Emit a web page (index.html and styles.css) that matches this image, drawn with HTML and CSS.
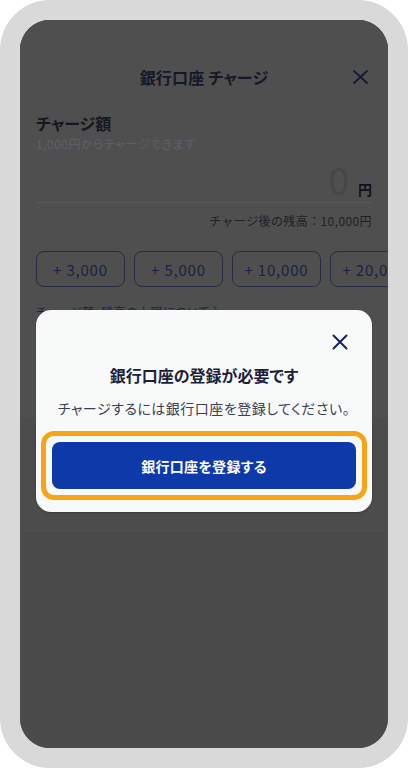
FILE: index.html
```html
<!DOCTYPE html>
<html lang="ja">
<head>
<meta charset="utf-8">
<title>銀行口座 チャージ</title>
<link rel="stylesheet" href="styles.css">
</head>
<body>
<div class="frame">
  <div class="screen">
    <div class="main">
      <header class="nav">
        <span></span>
        <h1 class="nav-title">銀行口座 チャージ</h1>
        <button class="nav-close" aria-label="閉じる">
          <svg width="15" height="14" viewBox="0 0 15 14"><path d="M1 1L14 13M14 1L1 13" stroke="currentColor" stroke-width="1.8" fill="none" stroke-linecap="round"/></svg>
        </button>
      </header>
      <section class="amount">
        <h2 class="amount-title">チャージ額</h2>
        <p class="amount-sub">1,000円からチャージできます</p>
        <div class="amount-row">
          <span class="amount-value">0</span>
          <span class="amount-unit">円</span>
        </div>
        <p class="balance">チャージ後の残高：10,000円</p>
        <div class="presets">
          <button class="preset">+ 3,000</button>
          <button class="preset">+ 5,000</button>
          <button class="preset">+ 10,000</button>
          <button class="preset">+ 20,000</button>
        </div>
        <p class="limit-link">チャージ額・残高の上限について 〉</p>
      </section>
    </div>
    <div class="band"></div>

    <div class="overlay">
      <div class="modal" role="dialog">
        <div class="modal-head">
          <button class="modal-close" aria-label="閉じる">
            <svg width="16" height="16" viewBox="0 0 16 16"><path d="M1.5 1.5L14.5 14.5M14.5 1.5L1.5 14.5" stroke="currentColor" stroke-width="2" fill="none" stroke-linecap="round"/></svg>
          </button>
        </div>
        <h3 class="modal-title">銀行口座の登録が必要です</h3>
        <p class="modal-text">チャージするには銀行口座を登録してください。</p>
        <div class="highlight">
          <button class="primary">銀行口座を登録する</button>
        </div>
      </div>
    </div>
  </div>
</div>
</body>
</html>
```

FILE: styles.css
```css
* { box-sizing: border-box; }
html, body { margin: 0; padding: 0; background: #ffffff; }
body {
  font-family: "Noto Sans CJK JP", "Noto Sans", sans-serif;
  font-feature-settings: "palt";
}
h1, h2, h3, p { margin: 0; }
button { font-family: inherit; font-feature-settings: "palt"; cursor: pointer; }

.frame {
  width: 408px;
  height: 768px;
  border: 20px solid #d9d9d9;
  border-radius: 50px;
  overflow: hidden;
  background: #4a4b4a;
}
.screen {
  position: relative;
  height: 100%;
  background: #4a4b4a;
}

.main {
  background: #4f4f4f;
  padding-top: 35px;
  padding-bottom: 97px;
}

.nav {
  display: grid;
  grid-template-columns: 1fr auto 1fr;
  align-items: center;
  height: 44px;
  padding: 0 16px;
}
.nav-title {
  font-size: 16px;
  font-weight: 700;
  line-height: 24px;
  color: #15182a;
  letter-spacing: 0.2px;
}
.nav-close {
  justify-self: end;
  width: 24px;
  height: 24px;
  padding: 0;
  border: 0;
  background: none;
  color: #141a33;
  display: flex;
  align-items: center;
  justify-content: center;
}

.amount {
  padding: 12px 16px 0;
}
.amount-title {
  font-size: 16px;
  font-weight: 700;
  line-height: 24px;
  color: #15171f;
}
.amount-sub {
  font-size: 12px;
  line-height: 18px;
  color: #5b5f6a;
  letter-spacing: 0.5px;
}
.amount-row {
  display: flex;
  justify-content: flex-end;
  align-items: baseline;
  gap: 9px;
  margin-top: 4px;
  padding-bottom: 1px;
  border-bottom: 1px solid #585959;
}
.amount-value {
  font-size: 37px;
  line-height: 44px;
  color: #44474c;
}
.amount-unit {
  font-size: 14px;
  font-weight: 700;
  color: #10121c;
}
.balance {
  margin-top: 9px;
  text-align: right;
  font-size: 12px;
  line-height: 18px;
  color: #1e2028;
  font-feature-settings: normal;
  letter-spacing: 0.4px;
}

.presets {
  display: flex;
  gap: 9px;
  margin-top: 21px;
  margin-right: -16px;
  overflow: hidden;
}
.preset {
  flex: 0 0 89px;
  height: 36px;
  border: 1px solid #272c46;
  border-radius: 8px;
  background: transparent;
  color: #1b2145;
  font-size: 15px;
  letter-spacing: 0.8px;
  white-space: nowrap;
  padding: 0;
}

.limit-link {
  margin-top: 16px;
  font-size: 12px;
  line-height: 18px;
  color: #1e2444;
  letter-spacing: 0.5px;
}

.band {
  height: 113px;
  background: #4c4c4c;
  border-bottom: 1px solid #505050;
}

.overlay {
  position: absolute;
  inset: 0;
  padding: 290px 16px 0;
}
.modal {
  background: #f8f9f9;
  border-radius: 15px;
  padding: 20px 16px 12px;
  box-shadow: 0 1px 2px rgba(0, 0, 0, 0.25);
  text-align: center;
}
.modal-head {
  display: flex;
  justify-content: flex-end;
  padding-right: 4px;
}
.modal-close {
  width: 24px;
  height: 24px;
  padding: 0;
  border: 0;
  background: none;
  color: #1a2060;
  display: flex;
  align-items: center;
  justify-content: center;
}
.modal-title {
  margin-top: 9px;
  font-size: 16px;
  font-weight: 700;
  line-height: 24px;
  color: #1b1f3b;
}
.modal-text {
  margin-top: 11px;
  font-size: 14px;
  line-height: 20px;
  color: #3a3f55;
  letter-spacing: 0.5px;
}
.highlight {
  margin: 13px -11px 0;
  border: 5px solid #f7a416;
  border-radius: 13px;
  padding: 6px;
}
.primary {
  display: block;
  width: 100%;
  height: 47px;
  border: 0;
  border-radius: 8px;
  background: #0e3aa9;
  color: #ffffff;
  font-size: 14px;
  font-weight: 700;
  letter-spacing: 0.3px;
}
```
